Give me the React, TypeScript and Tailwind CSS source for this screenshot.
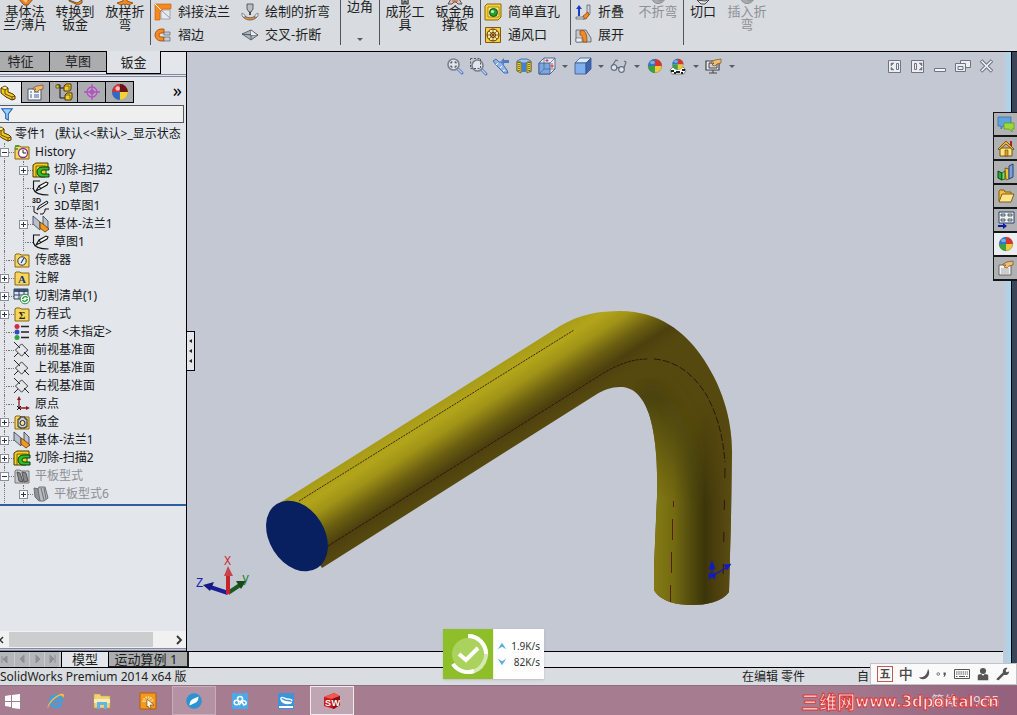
import type { ReactNode } from "react";
import { clsx } from "clsx";

const folder = (
  <path d="M1 3l1-1h4l1 1h8v12H1z" fill="#f7d65a" stroke="#8a6410" />
);

const ball = (
  <>
    <path d="M8 8V1a7 7 0 0 0-7 7z" fill="#2f74d0" />
    <path d="M8 8h7a7 7 0 0 0-7-7z" fill="#d8362c" />
    <path d="M8 8H1a7 7 0 0 0 7 7z" fill="#37a342" />
    <path d="M8 8v7a7 7 0 0 0 7-7z" fill="#f0c93a" />
    <circle cx="8" cy="8" r="6.8" fill="none" stroke="#4b5563" strokeOpacity=".5" strokeWidth=".6" />
    <ellipse cx="5.5" cy="4.5" rx="2.5" ry="1.8" fill="#fff" opacity=".4" />
  </>
);

const hand = <path d="M5 4l4-2 6-1v4l-4 1-2 2-3-1 2-2H5z" fill="#f0bd73" stroke="#7a4d18" strokeWidth=".7" />;

const magnifier = (
  <>
    <path d="M10.500 10.500l4.500 4.500" stroke="#5b7cc0" strokeWidth="3" strokeLinecap="round" />
    <path d="M10.500 10.500l4.500 4.500" stroke="#b9d0f5" strokeWidth="1.200" />
    <circle cx="6.500" cy="6.500" r="5.500" fill="#dfe4ee" stroke="#7b808b" strokeWidth="1.600" />
  </>
);

const icons: Record<string, ReactNode> = {
  miter: (
    <>
      <path d="M6 6h9v9H6z" fill="#e6e9ee" stroke="#7d828c" strokeWidth=".6" />
      <path d="M0 0h16v5H8L5 8v8H0z" fill="#f58a1f" stroke="#c2580b" strokeWidth=".6" />
      <path d="M0 0l6 6" stroke="#fff" />
      <path d="M7 7l8 7" stroke="#989da8" />
    </>
  ),
  hem: (
    <>
      <path d="M9 2H6a6 6 0 0 0 0 12h3v-4H6a2 2 0 0 1 0-4h3z" fill="#f58a1f" stroke="#9c4406" strokeWidth=".8" />
      <path d="M9 5h6v3H9zM9 10h6v4H9z" fill="#c7cbd2" stroke="#60646d" strokeWidth=".7" />
    </>
  ),
  sketchBend: (
    <>
      <path d="M5 0h6v5L9 8H7L5 5z" fill="#b9bec8" stroke="#3e424b" strokeWidth=".8" />
      <path d="M8 8v3" stroke="#222" strokeWidth="1.500" />
      <path d="M1 10c3 5 11 5 14 0v3c-4 4-10 4-14 0z" fill="#f0902c" stroke="#53575f" strokeWidth=".8" />
      <path d="M0 9l3 2v3l-3-2zM16 9l-3 2v3l3-2z" fill="#eef0f3" stroke="#53575f" strokeWidth=".6" />
    </>
  ),
  crossBreak: (
    <>
      <path d="M0 7l9-4 7 5-7 5z" fill="#aeb6c2" stroke="#464c58" strokeWidth=".8" />
      <path d="M0 7l9 1 7 0M9 3v10" stroke="#464c58" strokeWidth=".8" />
      <path d="M9 8V3.500L15 8z" fill="#e9edf2" />
    </>
  ),
  hole: (
    <>
      <path d="M0 2l2-2h14v13l-3 3H0z" fill="#f6d132" stroke="#8f6b08" />
      <path d="M3 3h11v10H3z" fill="#fbe789" stroke="#8f6b08" strokeWidth=".7" />
      <circle cx="8.500" cy="8.500" r="4" fill="#25a02c" stroke="#115215" />
      <circle cx="7.500" cy="7.500" r="1.600" fill="#c9f2c2" />
    </>
  ),
  vent: (
    <>
      <path d="M.5.5h15v15H.5z" fill="#f7cf3f" stroke="#84580a" />
      <circle cx="8" cy="8" r="6" fill="#fbe8a0" stroke="#5d3307" />
      <circle cx="8" cy="8" r="2.500" fill="none" stroke="#5d3307" />
      <path d="M8 2v12M2 8h12M4 4l8 8M12 4l-8 8" stroke="#5d3307" strokeWidth=".7" />
    </>
  ),
  fold: (
    <>
      <path d="M4 12V4" stroke="#1b3fc4" strokeWidth="2" />
      <path d="M1 5l3-4 3 4z" fill="#1b3fc4" />
      <path d="M12 1h3v9l-3 3z" fill="#cdd2da" stroke="#51565f" strokeWidth=".7" />
      <path d="M8 12l5-4 1 3-3 4H8z" fill="#ef8a25" stroke="#8c3e05" strokeWidth=".7" />
      <path d="M1 13h8v2H1z" fill="#dadde2" stroke="#51565f" strokeWidth=".7" />
    </>
  ),
  unfold: (
    <>
      <path d="M1 3h10l5 8v4H1z" fill="#c5cad3" stroke="#555a64" strokeWidth=".8" />
      <path d="M5 4c5-2 7 2 7 11H8C8 10 7 8 5 8z" fill="#f18a25" stroke="#8c3e05" strokeWidth=".7" />
      <path d="M1 11h6v4H1z" fill="#eceef2" stroke="#555a64" strokeWidth=".6" />
    </>
  ),
  zoomFit: (
    <>
      {magnifier}
      <path d="M4 5.500V4h1.500M7.500 4H9v1.500M9 7.500V9H7.500M5.500 9H4V7.500" stroke="#333" fill="none" />
    </>
  ),
  zoomArea: (
    <>
      <g transform="translate(1 1)">{magnifier}</g>
      <path d="M.5.5h10v10H.5z" fill="none" stroke="#555" strokeDasharray="2 1.500" />
    </>
  ),
  prevView: (
    <>
      <path d="M0 3l3-2 3 3 2 0 6 8 1 3-4 0-7-7z" fill="#8fb6ea" stroke="#335a9a" strokeWidth=".8" />
      <path d="M5 5l-2 2M9 8l-2 2M12 12l-2 1" stroke="#fff" />
      <path d="M8 3l3-3v2h5v3h-5v2z" fill="#4d7cc4" />
    </>
  ),
  section: (
    <>
      <path d="M1 3l4-2h6l4 2v11l-4-1V5H5v9l-4-1z" fill="#9cc3ee" stroke="#395f92" strokeWidth=".8" />
      <path d="M1 4h4v11l-4-2zM11 4h4v9l-4 2z" fill="#e9ce39" stroke="#6d5c08" strokeWidth=".8" />
      <path d="M3 4v10M13 4v10" stroke="#222" strokeDasharray="1 1" />
      <path d="M6 5h4v9H6z" fill="#3f83cf" />
    </>
  ),
  orient: (
    <>
      <path d="M0 5l5-5h11v11l-5 5H0z" fill="#e6e9f0" stroke="#4c5f86" strokeWidth=".9" />
      <path d="M0 5h11v11H0z" fill="#7ba8e2" stroke="#3f5e91" strokeWidth=".9" />
      <path d="M11 5l5-5M5 0v11L0 16M5 11h11" stroke="#4c5f86" strokeWidth=".7" fill="none" />
      <path d="M8 1v3M6.500 2.500h3M13 5v5M11.500 8H15" stroke="#d02c2c" strokeWidth=".9" />
    </>
  ),
  cube: (
    <>
      <path d="M0 5l5-5h11l-5 5z" fill="#dbe9fb" stroke="#36558d" strokeWidth=".8" />
      <path d="M0 5h11v11H0z" fill="#83b0ec" stroke="#36558d" strokeWidth=".8" />
      <path d="M11 5l5-5v11l-5 5z" fill="#3c67b2" stroke="#36558d" strokeWidth=".8" />
    </>
  ),
  glasses: (
    <g fill="#dce6f2" stroke="#686f7d" strokeWidth="1.200">
      <circle cx="3" cy="9.500" r="2.800" />
      <circle cx="10.500" cy="11.500" r="2.800" />
      <path d="M6 10q1-1 2 0M1 8L5 2l2 1M13 10l2-6-2-1" fill="none" />
    </g>
  ),
  ball,
  scene: (
    <>
      <path d="M0 12l3-3h10l3 3-2 4H2z" fill="#fff" stroke="#444" strokeWidth=".6" />
      <path d="M1 12h3v2H1zM6 13h4v2H6zM12 11h3v2h-3zM4 14h2v2H4zM11 14h2v2h-2z" fill="#222" />
      <g transform="translate(1.500 0) scale(.8)">{ball}</g>
    </>
  ),
  viewSet: (
    <>
      <path d="M0 3h13v9H0z" fill="#e8ebf1" stroke="#444" strokeWidth="1.200" />
      <path d="M3 5h8v5H3zM3 15h8M7 12v3" fill="#cdd3df" stroke="#444" />
      {hand}
    </>
  ),
  part: (
    <>
      <path d="M1 3l4-2 3 2v4l5 2 2 2v3l-3 1-6-3-5-4z" fill="#f3c622" stroke="#4a3702" />
      <path d="M1 3l4 2v4l7 3v3M5 5l3-2M12 12l3-1" fill="none" stroke="#4a3702" strokeWidth=".8" />
      <path d="M2 2.700L5 1.500l2 1.500-2 1z" fill="#fdf0a0" />
    </>
  ),
  property: (
    <>
      <path d="M0 5h13v11H0z" fill="#f6f7f9" stroke="#50545c" />
      <path d="M2 8h2M2 11h2M2 13h2M6 8h5M6 11h5M6 13h5" stroke="#3c63a8" />
      {hand}
    </>
  ),
  config: (
    <>
      <path d="M1 1h3v13h6M4 4h5" stroke="#111" fill="none" />
      <path d="M8 2l2-2h5v5l-1 2H8zM9 11l2-2h5v5l-1 2H9z" fill="#f4cd2e" stroke="#4b3902" />
      <path d="M8 2h5v4M9 11h5v4" stroke="#4b3902" strokeWidth=".7" fill="none" />
      <path d="M0 1h3v3H0z" fill="#f4cd2e" stroke="#4b3902" strokeWidth=".7" />
    </>
  ),
  target: (
    <g stroke="#b450c4" fill="none" strokeWidth="1.300">
      <circle cx="8" cy="8" r="5" />
      <circle cx="8" cy="8" r="1.800" />
      <path d="M8 0v16M0 8h16" />
    </g>
  ),
  display: (
    <g transform="translate(-1 -1) scale(1.120)">
      {ball}
      <path d="M8 8V1a7 7 0 0 0-7 7z" fill="#d8302c" />
      <path d="M8 8h7a7 7 0 0 0-7-7z" fill="#6d1418" />
      <path d="M8 8H1a7 7 0 0 0 7 7z" fill="#3467cc" />
      <path d="M8 8v7a7 7 0 0 0 7-7z" fill="#f0d338" />
      <circle cx="6" cy="5" r="2" fill="#fff" opacity=".7" />
    </g>
  ),
  funnel: <path d="M2 2h12L9.500 8v7L6.500 13V8z" fill="#9fd0f7" stroke="#1d5fb8" strokeWidth="1.200" />,
  history: (
    <>
      {folder}
      <circle cx="9" cy="9" r="4.500" fill="#fff" stroke="#7b3a8f" strokeWidth="1.300" />
      <path d="M9 6v3h3" stroke="#222" fill="none" />
      <path d="M1 2h4M1 5h3" stroke="#2f9a38" strokeWidth="1.500" />
    </>
  ),
  sweepCut: (
    <>
      <path d="M0 3l3-2h12v4l-2 0v8l-1 2H0z" fill="#f6cf25" stroke="#4a3a02" />
      <path d="M3 4h10M3 4v11" stroke="#4a3a02" strokeWidth=".7" />
      <path d="M16 5H9a4.500 4.500 0 0 0 0 10h7v-3h-6a2 2 0 0 1 0-4h6z" fill="#2cc02f" stroke="#0c3d0d" />
    </>
  ),
  sketch: (
    <g fill="none" stroke="#111" strokeWidth="1.100">
      <path d="M7 1H.5v8c1 4 5 6 15 6" />
      <path d="M3 11l3-5 7-4 2 1-1 2-7 4z" fill="#fff" />
      <path d="M6 6l2 3" />
    </g>
  ),
  sketch3d: (
    <>
      <text x="-1" y="5" fontSize="7" fontWeight="700" fontFamily="Liberation Sans, sans-serif" fill="#111">3D</text>
      <g fill="none" stroke="#111">
        <path d="M4 12l2-4 8-5 1 2-8 5zM1 8v6l4 2M7 16h3l2-3v-2h4" />
      </g>
    </>
  ),
  flange: (
    <>
      <path d="M0 0l7 6v8L0 8z" fill="#b8c1d0" stroke="#333946" strokeWidth=".8" />
      <path d="M10 0l5 5v9l-5-5z" fill="#b8c1d0" stroke="#333946" strokeWidth=".8" />
      <path d="M7 6l3 2 6 5-4 3-5-4z" fill="#f3991f" stroke="#5e3204" strokeWidth=".8" />
    </>
  ),
  sensor: (
    <>
      {folder}
      <circle cx="8" cy="9" r="4.200" fill="#e9eef5" stroke="#333" />
      <path d="M7 11l3-5" stroke="#1d3a7a" strokeWidth="1.200" />
    </>
  ),
  note: (
    <>
      {folder}
      <text x="8" y="13" textAnchor="middle" fontSize="11" fontWeight="700" fontFamily="Liberation Serif, serif" fill="#16387c">A</text>
    </>
  ),
  cutList: (
    <>
      <path d="M0 1h14v10H0z" fill="#dfe6f1" stroke="#33415e" />
      <path d="M0 1h14v3H0z" fill="#3d5277" />
      <path d="M0 7h14M5 1v10M10 1v10" stroke="#33415e" />
      <circle cx="11" cy="11" r="4.800" fill="#fff" stroke="#2b9440" />
      <path d="M8.500 11c1-3 4-3 5-1M13.500 11c-1 3-4 3-5 1" stroke="#2b9440" fill="none" strokeWidth="1.500" />
    </>
  ),
  sigma: (
    <>
      {folder}
      <text x="8" y="13" textAnchor="middle" fontSize="10" fontWeight="700" fontFamily="Liberation Serif, serif" fill="#222">Σ</text>
    </>
  ),
  material: (
    <>
      <circle cx="3" cy="2.500" r="2.500" fill="#d12d3c" />
      <circle cx="3" cy="8" r="2.500" fill="#2e49c9" />
      <circle cx="3" cy="13.500" r="2.500" fill="#2ea53b" />
      <path d="M7 2.500h8M7 8h8M7 13.500h8" stroke="#222" strokeWidth="1.300" />
    </>
  ),
  plane: (
    <g fill="none" stroke="#222">
      <path d="M7.500 1l7 7-7 7-7-7z" transform="translate(1 1) scale(.88)" />
      <path d="M0 0l6 6M10 10l5 5M0 15l4-4" />
    </g>
  ),
  origin: (
    <>
      <path d="M5 12V3M5 12h8" stroke="#8e1c20" strokeWidth="1.300" />
      <path d="M3 4l2-4 2 4zM12 10l4 2-4 2z" fill="#8e1c20" />
      <path d="M3 10l4 4M7 10l-4 4" stroke="#111" />
    </>
  ),
  sheet: (
    <>
      {folder}
      <path d="M4 5h2V3h5v2h2v8h-2v1H6v-1H4z" fill="#c9ced8" stroke="#222" />
      <circle cx="8.500" cy="9" r="2.500" fill="#f6e29a" stroke="#222" />
    </>
  ),
  flat: (
    <>
      <path d="M1 3l1-1h4l1 1h8v12H1z" fill="#c6c8cb" stroke="#777" />
      <path d="M3 4l3 1 3 9-4-1zM8 4l4 1 2 8-4 1z" fill="#85888d" stroke="#555" />
    </>
  ),
  flatItem: (
    <g stroke="#6d7075">
      <path d="M1 2l5 1 4 11-4 1-4-4z" fill="#8f9297" />
      <path d="M6 1h6l3 11-4 3H7L5 3z" fill="#b9bcc0" />
      <path d="M8 2l3 12M11 2l2 11" />
    </g>
  ),
  chat: (
    <>
      <path d="M0 1h13v9H5l-2 3v-3H0z" fill="#5fa3de" stroke="#2d6ca8" strokeWidth=".7" />
      <path d="M6 7h10v6h-2v3l-3-3H6z" fill="#9cd83a" stroke="#5d9516" strokeWidth=".7" />
    </>
  ),
  home: (
    <>
      <path d="M12 1h2v6h-2z" fill="#b52020" />
      <path d="M2 8h12v8H2z" fill="#fbe687" stroke="#7a5408" />
      <path d="M0 9l8-8 8 8-1 1-7-6-7 6z" fill="#f3b534" stroke="#6b4306" strokeWidth=".8" />
      <path d="M7 10h3v6H7z" fill="#d89a28" stroke="#6b4306" strokeWidth=".6" />
    </>
  ),
  library: (
    <>
      <path d="M0 7l4 2v7l-4-2z" fill="#2fa53a" stroke="#0e4514" />
      <path d="M4 9l3-2v8l-3 1z" fill="#7ad36c" stroke="#0e4514" strokeWidth=".7" />
      <path d="M7 4l4 1v10l-3 1z" fill="#f0c535" stroke="#6a4c05" strokeWidth=".8" />
      <path d="M11 2l4-2v13l-4 2z" fill="#7c9fe0" stroke="#23407e" />
    </>
  ),
  open: (
    <>
      <path d="M1 3l1-1h4l1 2h6v9H1z" fill="#f1bf43" stroke="#8a5b10" />
      <path d="M4 6h12l-3 8H1z" fill="#fce58f" stroke="#8a5b10" />
    </>
  ),
  palette: (
    <>
      <path d="M1 0h15v11H1z" fill="#eef2f8" stroke="#27406f" />
      <path d="M3 2h4v2H3zM10 2h4v2h-4zM3 7h4v2H3zM10 7h4v2h-4z" fill="#f0d56a" stroke="#27406f" strokeWidth=".8" />
      <path d="M0 13h5v-2l4 3-4 3v-2H0z" fill="#1118a8" />
    </>
  ),
  custom: (
    <>
      <path d="M1 5h12v10H1z" fill="#f4f4f4" stroke="#666" />
      <path d="M3 9h8M3 11h8M3 13h8" stroke="#a5a5a5" />
      {hand}
    </>
  ),
  dockLeft: (
    <g fill="none" stroke="#6f7480">
      <path d="M1.500 2.500h12v12h-12z" fill="#eceef3" />
      <path d="M9.500 5.500h2v6h-2z" />
      <path d="M4 5h3L4 8zM4 12h3L4 9z" fill="#6f7480" strokeWidth=".5" />
    </g>
  ),
  dockRight: (
    <g fill="none" stroke="#6f7480">
      <path d="M1.500 2.500h12v12h-12z" fill="#eceef3" />
      <path d="M4.500 5.500h2v6h-2z" />
      <path d="M12 5H9l3 3zM12 12H9l3-3z" fill="#6f7480" strokeWidth=".5" />
    </g>
  ),
  minimize: <path d="M1.500 10.500h11v3h-11z" fill="#f4f5f8" stroke="#6f7480" />,
  restore: (
    <g fill="#eceef3" stroke="#6f7480">
      <path d="M4.500 2.500h10v7h-10z" />
      <path d="M-.5 5.500h10v8h-10z" />
      <path d="M2 8.500h5v3H2z" />
    </g>
  ),
  close: (
    <>
      <path d="M2 2.500l11 11M13 2.500l-11 11" stroke="#6f7480" strokeWidth="3.600" />
      <path d="M2.500 3l10 10M12.500 3l-10 10" stroke="#f1f2f6" strokeWidth="1.600" />
    </>
  ),
  windows: (
    <path d="M0 3l6-1v6H0zM7 2l8-1v7H7zM0 9h6v5l-6-1zM7 9h8v7l-8-1z" fill="#fff" />
  ),
  ie: (
    <>
      <path d="M13 10.500A5.500 5.500 0 1 1 13.500 8H5" fill="none" stroke="#3f9fe0" strokeWidth="3" />
      <path d="M0 16c-2-3 4-12 12-15 4-1 5 1 3 4 0-2-2-3-4-2C5 6 0 12 0 16z" fill="#f1c33a" />
    </>
  ),
  explorer: (
    <>
      <path d="M0 1h6l1 2h9v12H0z" fill="#efd27a" stroke="#c49a3a" strokeWidth=".6" />
      <path d="M0 6h16v4H0z" fill="#fbedb4" />
      <path d="M3 16V9h10v7h-3v-4H6v4z" fill="#5fb4e8" />
    </>
  ),
  tool: (
    <>
      <path d="M0 0h16v16H0z" fill="#f39a1e" stroke="#b55e08" />
      <path d="M3 9a5 5 0 0 1 10 0M5 9a3 3 0 0 1 6 0" stroke="#fde3a5" fill="none" strokeDasharray="1.500 1" strokeWidth="1.500" />
      <path d="M7 6l7 6-4 0 1 3-2 0-1-2-1 1z" fill="#fff" stroke="#6b3a05" strokeWidth=".6" />
    </>
  ),
  compass: (
    <>
      <circle cx="8" cy="8" r="7.800" fill="#2b93d1" />
      <path d="M12.500 3.500q0 5-3.500 6.500l-5.500 2.500q0-5 3.500-6.500z" fill="#fff" />
    </>
  ),
  cloud: (
    <>
      <path d="M0 0h16v16H0z" fill="#4aa9ea" />
      <g fill="none" stroke="#fff" strokeWidth="1.500">
        <circle cx="4.500" cy="9.500" r="2.300" />
        <circle cx="8" cy="6" r="2.500" />
        <path d="M9 8l3 4q3-1 2-3t-4-1l-3 4" />
      </g>
    </>
  ),
  loop: (
    <>
      <path d="M0 0h16v16H0z" fill="#3d93dc" />
      <path d="M14 8c0-2-3-2-5-2S4 3 3 5s4 4 7 4 4 1 3 0M3 7c2 3 6 4 10 3" fill="none" stroke="#fff" strokeWidth="1.400" />
      <path d="M1 13h14v2H1z" fill="#fff" />
    </>
  ),
  solidworks: (
    <>
      <path d="M0 4l10-4 6 3v9l-6 4-10-3z" fill="#c9191c" />
      <path d="M0 4l10-4 6 3-8 3z" fill="#ee5a50" />
      <path d="M8 6l8-3v9l-7 4z" fill="#8f0c10" />
      <text x="1" y="13" fontSize="9" fontWeight="700" fontFamily="Liberation Sans, sans-serif" fill="#fff">S</text>
      <text x="7.500" y="13" fontSize="9" fontWeight="700" fontFamily="Liberation Sans, sans-serif" fill="#fff">W</text>
    </>
  ),
  moon: <path d="M12 1c4 6 0 14-7 14-2 0-4-1-5-3 7 2 11-4 12-11z" fill="#555" />,
  punct: (
    <>
      <circle cx="3" cy="8" r="1.800" fill="none" stroke="#555" />
      <path d="M10 6h3v3l-2 3h-1l1-3h-1z" fill="#555" />
    </>
  ),
  keyboard: (
    <>
      <path d="M.5 3.500h15v9H.5z" fill="#fff" stroke="#555" />
      <path d="M2 6h12M2 8h12M2 10.500h2M12 10.500h2" stroke="#555" strokeDasharray="1.500 .7" />
      <path d="M5 10.500h6" stroke="#555" />
    </>
  ),
  person: (
    <>
      <circle cx="8" cy="4.500" r="3.500" fill="#555" />
      <path d="M2 15V10q0-2 4-2l2 2 2-2q4 0 4 2v5z" fill="#555" />
    </>
  ),
  wrench: <path d="M1 13l7-7c-1-3 2-6 5-5l-2 3 1 2 3-1c0 3-3 5-6 4l-6 6c-2 0-3-1-2-2z" fill="#555" />,
  bigA: (
    <>
      <path d="M0 8l7 8h4l6-7-6 2z" fill="#e98322" stroke="#7a3a08" strokeWidth=".8" />
      <path d="M4 9l5 5 3-5z" fill="#f7c38c" />
    </>
  ),
  bigB: (
    <>
      <path d="M2 11l8 3 5-3v3l-4 2-9-4z" fill="#f08a20" stroke="#62431f" strokeWidth=".8" />
      <path d="M3 8l8 5 4-4z" fill="#dfe3ea" />
    </>
  ),
  bigC: <path d="M0 14l6-2V8h4v4l6 2-4 2-3-1-1 1-1-1-3 1z" fill="#f08a20" stroke="#8b4309" strokeWidth=".8" />,
  bigD: <path d="M5 8h6v7H9v-3H7v3H5z" fill="#f5f6f8" stroke="#222" strokeWidth="1.200" />,
  bigE: (
    <>
      <path d="M1 15l3-5h8l3 5h-4l-2-2H7l-2 2z" fill="#d9c4bb" stroke="#444" strokeWidth=".9" />
      <path d="M5 12h6" stroke="#c04a20" />
    </>
  ),
  bigGray: <path d="M2 10c2 6 10 6 13 0l-5 2-4-3z" fill="#a9abae" stroke="#8a8c90" />,
  bigF: <path d="M2 11l4 4h4l5-5-5 2z" fill="#e6e3e3" stroke="#444" />,
};

function Icon({ name, className }: { name: string; className?: string }) {
  return (
    <svg viewBox="0 0 16 16" className={clsx("shrink-0 overflow-visible", className ?? "h-4 w-4")} aria-hidden="true">
      {icons[name]}
    </svg>
  );
}

function Arrow() {
  return <span className="h-0 w-0 border-x-3 border-t-3 border-x-transparent border-t-[#555a66]" />;
}

function BigButton({ icon, lines, muted }: { icon: string; lines: string[]; muted?: boolean }) {
  return (
    <button type="button" className={clsx("flex w-[50px] shrink-0 flex-col items-center leading-[13px]", muted && "text-[#8d9095]")}>
      <Icon name={icon} className="-mt-[11px] h-4 w-4" />
      {lines.map((line) => (
        <span key={line} className="whitespace-nowrap">{line}</span>
      ))}
    </button>
  );
}

function SmallColumn({ items, className }: { items: string[][]; className: string }) {
  return (
    <div className={clsx("flex shrink-0 flex-col pl-1", className)}>
      {items.map(([icon, label]) => (
        <button key={label} type="button" className="flex h-[23px] items-center gap-[7px] whitespace-nowrap">
          <Icon name={icon} />
          {label}
        </button>
      ))}
    </div>
  );
}

function Divider() {
  return <div className="h-[45px] w-px shrink-0 bg-[#50545c]" />;
}

function Ribbon() {
  return (
    <header className="flex h-[52px] shrink-0 overflow-hidden border-b border-black bg-[#d8dbe0] text-[13px] text-[#1c1e22]">
      <BigButton icon="bigA" lines={["基体法", "兰/薄片"]} />
      <BigButton icon="bigB" lines={["转换到", "钣金"]} />
      <BigButton icon="bigC" lines={["放样折", "弯"]} />
      <Divider />
      <SmallColumn className="w-[87px]" items={[["miter", "斜接法兰"], ["hem", "褶边"]]} />
      <SmallColumn className="w-[102px]" items={[["sketchBend", "绘制的折弯"], ["crossBreak", "交叉-折断"]]} />
      <Divider />
      <button type="button" className="flex w-[38px] shrink-0 flex-col items-center justify-between pb-2.5 leading-[13px]">
        边角
        <Arrow />
      </button>
      <Divider />
      <BigButton icon="bigD" lines={["成形工", "具"]} />
      <BigButton icon="bigE" lines={["钣金角", "撑板"]} />
      <Divider />
      <SmallColumn className="w-[89px]" items={[["hole", "简单直孔"], ["vent", "通风口"]]} />
      <Divider />
      <SmallColumn className="w-[62px]" items={[["fold", "折叠"], ["unfold", "展开"]]} />
      <BigButton icon="bigGray" lines={["不折弯"]} muted />
      <Divider />
      <div className="flex">
        <div className="flex w-[38px] justify-center">
          <BigButton icon="bigF" lines={["切口"]} />
        </div>
        <BigButton icon="bigGray" lines={["插入折", "弯"]} muted />
      </div>
    </header>
  );
}

type Node = { icon: string; label: string; level: number; expand?: "+" | "-"; muted?: boolean };

const nodes: Node[] = [
  { icon: "history", label: "History", level: 1, expand: "-" },
  { icon: "sweepCut", label: "切除-扫描2", level: 2, expand: "+" },
  { icon: "sketch", label: "(-) 草图7", level: 2 },
  { icon: "sketch3d", label: "3D草图1", level: 2 },
  { icon: "flange", label: "基体-法兰1", level: 2, expand: "+" },
  { icon: "sketch", label: "草图1", level: 2 },
  { icon: "sensor", label: "传感器", level: 1 },
  { icon: "note", label: "注解", level: 1, expand: "+" },
  { icon: "cutList", label: "切割清单(1)", level: 1, expand: "+" },
  { icon: "sigma", label: "方程式", level: 1, expand: "+" },
  { icon: "material", label: "材质 <未指定>", level: 1 },
  { icon: "plane", label: "前视基准面", level: 1 },
  { icon: "plane", label: "上视基准面", level: 1 },
  { icon: "plane", label: "右视基准面", level: 1 },
  { icon: "origin", label: "原点", level: 1 },
  { icon: "sheet", label: "钣金", level: 1, expand: "+" },
  { icon: "flange", label: "基体-法兰1", level: 1, expand: "+" },
  { icon: "sweepCut", label: "切除-扫描2", level: 1, expand: "+" },
  { icon: "flat", label: "平板型式", level: 1, expand: "-", muted: true },
  { icon: "flatItem", label: "平板型式6", level: 2, expand: "+", muted: true },
];

function TreeRow({ node }: { node: Node }) {
  return (
    <li className="flex h-[18px]">
      {node.level === 2 && <span className="ml-1 w-[15px] shrink-0 border-l border-dotted border-[#777]" />}
      <span className="relative flex w-[9px] shrink-0 items-center">
        <span className="absolute inset-y-0 left-1 border-l border-dotted border-[#777]" />
        {node.expand ? (
          <button
            type="button"
            aria-label={node.expand === "+" ? "展开" : "折叠"}
            className="relative flex h-[9px] w-[9px] items-center justify-center border border-[#8b909a] bg-white"
          >
            <span className="h-px w-[5px] bg-[#26365c]" />
            {node.expand === "+" && <span className="absolute h-[5px] w-px bg-[#26365c]" />}
          </button>
        ) : (
          <span className="ml-1 w-full border-t border-dotted border-[#777]" />
        )}
      </span>
      <span className="w-[5px] shrink-0 self-center border-t border-dotted border-[#777]" />
      <Icon name={node.icon} className="h-4 w-4 self-center" />
      <span className={clsx("ml-[5px] leading-[18px] whitespace-nowrap", node.muted && "text-[#8c8f94]")}>{node.label}</span>
    </li>
  );
}

const panelTabs = ["property", "config", "target", "display"];

function FeaturePanel() {
  return (
    <aside className="flex w-[187px] shrink-0 flex-col border-r border-black bg-[#e3e6ea]">
      <nav className="flex h-[22px] text-[13px] text-[#222]">
        <button type="button" className="h-5 w-[50px] border-r border-b border-black bg-[#abacae] pr-2 leading-[17px]">特征</button>
        <button type="button" className="h-5 w-14 border-b border-black bg-[#abacae] leading-[17px]">草图</button>
        <button type="button" className="relative -mt-px h-[23px] w-[55px] border-r border-b border-l border-black bg-[#dfe2e7] leading-[18px]">钣金</button>
      </nav>
      <div className="h-[3px] border-y border-[#8489a0]" />

      <div className="mt-1 flex h-[22px]">
        <button type="button" aria-label="特征树" className="w-[21px] overflow-hidden border-t border-black bg-[#eceef1]">
          <Icon name="part" className="h-4 w-4" />
        </button>
        {panelTabs.map((name) => (
          <button key={name} type="button" aria-label={name} className="flex w-7 items-center justify-center border border-r-0 border-black bg-[#acadb0]">
            <Icon name={name} />
          </button>
        ))}
        <span className="flex-1 border-l border-black pr-1 text-right text-[18px] leading-[18px]">»</span>
      </div>

      <label className="mt-0.5 mr-0.5 flex h-[18px] items-center border border-l-0 border-[#555a63] bg-[#efeff0]">
        <Icon name="funnel" className="h-3.5 w-3.5" />
        <input aria-label="过滤" className="min-w-0 flex-1 bg-transparent px-1 text-xs outline-none" />
      </label>

      <div className="min-h-0 flex-1 overflow-hidden pt-[2px] text-xs text-[#14161a]">
        <div className="flex h-[18px] items-center whitespace-pre">
          <Icon name="part" className="mr-[3px] -ml-1 h-4 w-4" />
          {"零件1   (默认<<默认>_显示状态"}
        </div>
        <ul className="border-b-2 border-[#2c5f9e] pb-px">
          {nodes.map((node, index) => (
            <TreeRow key={index} node={node} />
          ))}
        </ul>
      </div>

      <div className="flex h-[17px] items-center bg-[#f1f1f2]">
        <svg viewBox="0 0 9 16" className="h-4 w-[9px]"><path d="M3 5L0 8l3 3" stroke="#333" strokeWidth="1.500" fill="none" /></svg>
        <div className="h-[15px] w-36 bg-[#cccdce]" />
        <svg viewBox="0 0 9 16" className="mr-0.5 ml-auto h-4 w-[9px]"><path d="M2 4l4 4-4 4" stroke="#333" strokeWidth="1.800" fill="none" /></svg>
      </div>
      <div className="h-[3px] border-y border-[#8489a0] bg-[#c4c7dc]" />
    </aside>
  );
}

const pipe =
  "M281 502L560 326C580 314 600 311 620 311C660 311 685 333 700 354C722 385 732 418 732 452L731 517L729 592C722 602 706 605 692 605C676 605 660 601 654 590L654 567L657 497C658 460 655 433 649 414C642 394 632 387 620 387C611 387 604 390 597 394L322 568Z";

function Model() {
  return (
    <svg viewBox="187 52 816 599" className="absolute inset-0 h-full w-full" role="img" aria-label="零件1">
      <defs>
        <linearGradient id="arm" gradientUnits="userSpaceOnUse" x1="410" y1="421" x2="451" y2="485">
          <stop offset="0" stopColor="#a89b18" />
          <stop offset=".18" stopColor="#b3a51a" />
          <stop offset=".36" stopColor="#a09317" />
          <stop offset=".6" stopColor="#6b5f11" />
          <stop offset=".8" stopColor="#4d400e" />
          <stop offset="1" stopColor="#56490f" />
        </linearGradient>
        <linearGradient id="leg" gradientUnits="userSpaceOnUse" x1="654" y1="0" x2="732" y2="0">
          <stop offset="0" stopColor="#837a14" />
          <stop offset=".25" stopColor="#746b11" />
          <stop offset=".48" stopColor="#514a0d" />
          <stop offset=".65" stopColor="#3c350a" />
          <stop offset=".85" stopColor="#50430f" />
          <stop offset="1" stopColor="#5c4e12" />
        </linearGradient>
        <linearGradient id="fade" gradientUnits="userSpaceOnUse" x1="680" y1="400" x2="668" y2="500">
          <stop offset="0" stopColor="#000" />
          <stop offset="1" stopColor="#fff" />
        </linearGradient>
        <mask id="legMask" maskUnits="userSpaceOnUse" x="187" y="52" width="816" height="599">
          <path d="M187 52h816v599H187z" fill="url(#fade)" />
        </mask>
        <clipPath id="pipeClip">
          <path d={pipe} />
        </clipPath>
        <filter id="soft">
          <feGaussianBlur stdDeviation="9" />
        </filter>
      </defs>
      <path d={pipe} fill="url(#arm)" />
      <g clipPath="url(#pipeClip)">
        <path d="M640 390C665 410 685 450 695 510" stroke="#48430c" strokeWidth="32" fill="none" filter="url(#soft)" />
        <path d="M640 380h110v240H640z" fill="url(#leg)" mask="url(#legMask)" />
      </g>
      <ellipse cx="297" cy="536" rx="38" ry="27.600" transform="rotate(57.700 297 536)" fill="#08205f" />
      <g fill="none" stroke="#2e1610">
        <path d="M299 501L574 330" strokeDasharray="2 1" strokeWidth=".9" />
        <path d="M328 546L602 374C620 363 634 359 648 359" strokeDasharray="3 1" />
        <path d="M654 359C680 361 697 379 707 396C718 416 723 438 725 462" strokeDasharray="7 2" />
        <path d="M725 468L723 582" strokeDasharray="10 22" />
        <path d="M673.500 501v6M672.500 519v21M671.500 552v21M670.500 585v17" stroke="#571f12" />
      </g>

      <g stroke="#1018c8" strokeWidth="1.300">
        <path d="M712 576v-10M712 576l14-8M709 573l6 6M715 573l-6 6M708 576h8" />
        <path d="M709 569l3-8 3 8zM724 565l7-1-4 6z" fill="#1018c8" strokeWidth=".5" />
      </g>

      {/* Axis triad */}
      <g fontFamily="Liberation Mono, monospace" fontSize="12">
        <path d="M228 593l-18-6" stroke="#1a1f94" strokeWidth="4" />
        <path d="M203 585l11-3-4 9z" fill="#151a7e" />
        <path d="M228 593l12-8" stroke="#1d5a20" strokeWidth="4" />
        <path d="M246 581l-10 0 5 8z" fill="#17491a" />
        <path d="M228 594v-22" stroke="#c7242a" strokeWidth="4" />
        <path d="M224 576l4-10 5 10z" fill="#c9444a" />
        <text x="224" y="565" fill="#cf2b30">X</text>
        <text x="196" y="587" fill="#1a1fb0">Z</text>
        <text x="242" y="582" fill="#1d7a24">y</text>
      </g>
    </svg>
  );
}

const viewTools = ["zoomFit", "zoomArea", "prevView", "section", "orient", "|", "cube", "|", "glasses", "|", "ball", "scene", "|", "viewSet", "|"];
const windowTools = ["dockLeft", "dockRight", "minimize", "restore", "close"];
const taskTabs = ["chat", "home", "library", "open", "palette", "ball", "custom"];

function Viewport() {
  return (
    <section className="relative min-w-0 flex-1 overflow-hidden bg-[#c4c8d3]">
      <Model />
      <div className="relative grid grid-cols-[1fr_auto_1fr] items-center pt-1.5 pr-2">
        <span />
        <div className="flex items-center gap-[7px]">
          {viewTools.map((name, index) =>
            name === "|" ? (
              <Arrow key={index} />
            ) : (
              <button key={index} type="button" aria-label={name}>
                <Icon name={name} />
              </button>
            ),
          )}
        </div>
        <div className="flex justify-end gap-[7px]">
          {windowTools.map((name) => (
            <button key={name} type="button" aria-label={name}>
              <Icon name={name} />
            </button>
          ))}
        </div>
      </div>
      <button type="button" aria-label="收起面板" className="absolute top-[279px] left-0 flex h-10 w-2 flex-col items-center justify-around border border-l-0 border-black bg-[#e3e6ea] py-1">
        {[0, 1, 2].map((i) => (
          <span key={i} className="h-0 w-0 border-y-2 border-r-3 border-y-transparent border-r-[#222]" />
        ))}
      </button>
    </section>
  );
}

function SheetTabs() {
  return (
    <div className="flex h-[17px] shrink-0 border-y border-black bg-[#e3e6ea] text-[13px] leading-[13px] text-[#1c1e22]">
      <div className="flex w-[61px] gap-px bg-[#c9cbcf]">
        {["M7 4L3 7l4 4zM2 4v7", "M9 3L5 7l4 4z", "M6 3l4 4-4 4z", "M5 3l4 4-4 4zM10 3v8"].map((d) => (
          <svg key={d} viewBox="0 0 14 15" className="h-full w-3.5 bg-[#b4b6ba]">
            <path d={d} fill="#8d9096" stroke="#8d9096" />
          </svg>
        ))}
      </div>
      <button type="button" className="w-12 border-x border-black bg-[#e3e6ea] leading-[13px]">模型</button>
      <button type="button" className="w-20 border-r-2 border-b border-[#222] bg-[#abacae] pr-1 leading-[13px] whitespace-nowrap">运动算例 1</button>
    </div>
  );
}

function StatusBar() {
  return (
    <footer className="flex h-[17px] shrink-0 items-center bg-[#d9dce0] text-xs leading-4 whitespace-nowrap text-[#1c1e22]">
      <span>SolidWorks Premium 2014 x64 版</span>
      <span className="ml-auto w-[115px]">在编辑 零件</span>
      <span className="w-[146px]">自</span>
    </footer>
  );
}

function ImeBar() {
  return (
    <div className="absolute right-0 bottom-[30px] flex h-[22px] w-[147px] items-center justify-between border border-[#c3c3c6] bg-[#fafafa] px-1.5 text-[#4b4b4b]">
      <span className="flex h-4 w-4 items-center justify-center border border-[#c05a50] text-[11px] leading-3 font-bold">五</span>
      <span className="text-sm leading-4 font-medium">中</span>
      <Icon name="moon" className="h-3 w-3" />
      <Icon name="punct" className="h-3 w-3" />
      <Icon name="keyboard" />
      <Icon name="person" className="h-3.5 w-3.5" />
      <Icon name="wrench" className="h-3.5 w-3.5" />
    </div>
  );
}

function SpeedWidget() {
  return (
    <div className="absolute bottom-9 left-[443px] flex h-[50px] bg-white text-[10px] text-[#333] shadow">
      <svg viewBox="0 0 50 50" className="h-[50px] w-[50px] bg-[#8ebf2b]">
        <circle cx="25" cy="25" r="16" fill="#aad25c" />
        <path d="M25 7A18 18 0 1 1 10 35" fill="none" stroke="#d6e9b2" strokeWidth="4" />
        <path d="M25 7A18 18 0 0 1 43 25M31 42A18 18 0 0 1 10 35" fill="none" stroke="#fff" strokeWidth="4" />
        <path d="M16 25l7 6 12-12" fill="none" stroke="#fff" strokeWidth="4" />
      </svg>
      <div className="flex w-[51px] flex-col justify-center border-l border-[#eef3e0] pr-1 pl-[3px]">
        {[["M1 10l5-8 5 8-5-3z", "1.9K/s"], ["M1 2l5 8 5-8-5 3z", "82K/s"]].map(([d, value]) => (
          <div key={value} className="flex h-4 items-center justify-between">
            <svg viewBox="0 0 12 12" className="h-2.5 w-2.5"><path d={d} fill="#56aee0" /></svg>
            {value}
          </div>
        ))}
      </div>
    </div>
  );
}

const apps = ["ie", "explorer", "tool", "compass", "cloud", "loop", "solidworks"];

function Taskbar() {
  return (
    <nav className="flex h-[30px] shrink-0 items-stretch gap-0.5 overflow-hidden border-t border-[#8d7080] bg-linear-to-r from-[#a67d90] from-80% to-[#94607c]">
      <button type="button" aria-label="开始" className="flex w-8 items-center pl-[5px]">
        <Icon name="windows" />
      </button>
      {apps.map((name) => (
        <button
          key={name}
          type="button"
          aria-label={name}
          className={clsx(
            "flex w-11 items-center justify-center",
            name === "compass" && "border border-[#c7acb9] bg-[#b592a3]",
            name === "solidworks" && "border border-[#f3eaef] bg-[#c0a5b3]",
          )}
        >
          <Icon name={name} />
        </button>
      ))}
      <div className="relative mr-[18px] ml-auto flex items-center pt-1">
        <div className="absolute top-1 right-0 flex gap-4 text-[13px] leading-5 text-[#e6d6de]">
          <span>简体</span>
          <span>9:35</span>
        </div>
        <a
          href="#portal"
          className="relative flex items-center font-['DejaVu_Sans','Noto_Sans_CJK_SC',sans-serif] text-[15px] font-bold whitespace-nowrap text-[#fdeeee] [-webkit-text-stroke:1px_#dd3535]"
        >
          <span className="text-lg leading-5">三维网</span>www.3dportal.cn
        </a>
      </div>
    </nav>
  );
}

export default function App() {
  return (
    <div className="relative flex h-screen flex-col overflow-hidden bg-[#d9dce0] font-['Noto_Sans','Noto_Sans_CJK_SC',sans-serif]">
      <Ribbon />
      <main className="relative flex min-h-0 flex-1">
        <div className="flex min-w-0 flex-1 flex-col">
          <div className="flex min-h-0 flex-1">
            <FeaturePanel />
            <Viewport />
          </div>
          <SheetTabs />
          <StatusBar />
        </div>
        <div className="flex w-3.5 shrink-0">
          <div className="w-[9px] border-r border-black bg-linear-to-r from-[#c4c8d3] to-[#a3d8f2]" />
          <div className="flex-1 bg-[#3a4558]" />
        </div>
        <div className="absolute top-[60px] right-0 flex flex-col border-t border-[#14161a]">
          {taskTabs.map((name) => (
            <button
              key={name}
              type="button"
              aria-label={name}
              className={clsx(
                "flex h-6 w-6 items-center justify-center border-b-2 border-l border-[#14161a]",
                name === "ball" ? "bg-[#eceef1]" : "bg-[#b0b1b3]",
              )}
            >
              <Icon name={name} />
            </button>
          ))}
        </div>
      </main>
      <Taskbar />
      <SpeedWidget />
      <ImeBar />
    </div>
  );
}
